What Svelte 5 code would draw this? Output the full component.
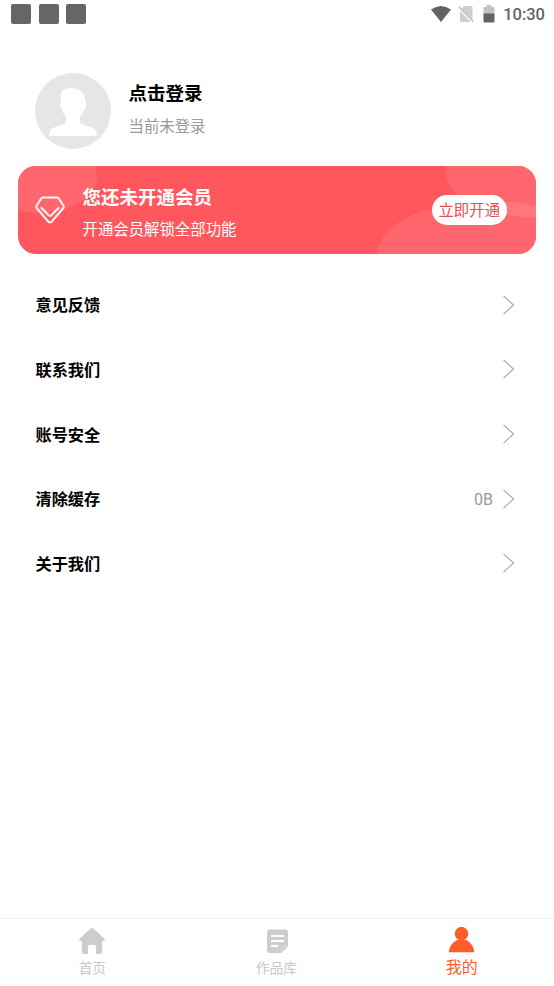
<script>
  const rows = [
    { label: '意见反馈' },
    { label: '联系我们' },
    { label: '账号安全' },
    { label: '清除缓存', value: '0B' },
    { label: '关于我们' }
  ];
</script>

<div class="screen">
  <header class="status">
    <div class="notices"><i></i><i></i><i></i></div>
    <div class="system">
      <svg class="wifi" width="22" height="18" viewBox="0 0 22 18"><path d="M1 4.5Q11-2.5 21 4.5L11 17Z" fill="#636363" /></svg>
      <svg class="sim" width="16" height="18" viewBox="0 0 16 18">
        <path d="M6 1H13.5Q14.5 1 14.5 2V16Q14.5 17 13.5 17H3Q2 17 2 16V5Z" fill="#cecece" />
        <path d="M.2 2.2 15 17" stroke="#fff" stroke-width="3" />
        <path d="M.5 1.5 15.3 16.5" stroke="#bcbcbc" stroke-width="1.5" />
      </svg>
      <svg class="battery" width="12" height="18" viewBox="0 0 12 18">
        <path d="M3.5 0H8.5V2H11Q11.5 2 11.5 3V9H.5V3Q.5 2 1 2H3.5Z" fill="#c2c2c2" />
        <path d="M.5 8.5H11.5V16.5Q11.5 17.5 10.5 17.5H1.5Q.5 17.5.5 16.5Z" fill="#636363" />
      </svg>
      <time>10:30</time>
    </div>
  </header>

  <section class="profile">
    <svg class="avatar" width="76" height="76" viewBox="0 0 76 76">
      <circle cx="38" cy="38" r="38" fill="#e6e6e6" />
      <path d="M27 18Q30 15 36 15Q40 15 44 17Q50 19 50 27Q51 28 51 31Q51 36 48.5 37Q48 41 45 44V48Q45 51 51 52.5L58 55Q62 57 62 63H14Q14 57 18 55L25 52.5Q31 51 31 48V44Q28 41 27.5 37Q25 36 25 31Q25 29 26.3 28Q25 21 27 18Z" fill="#fff" />
    </svg>
    <div class="identity">
      <h1>点击登录</h1>
      <p>当前未登录</p>
    </div>
  </section>

  <section class="member">
    <svg class="backdrop" width="518" height="88" viewBox="0 0 518 88" aria-hidden="true">
      <g fill="#ff666d">
        <ellipse cx="20" cy="11" rx="59" ry="36" />
        <path d="M428 0Q426 24 449 36Q482 52 518 51V0Z" />
        <path d="M358 88Q362 63 397 48C430 35 476 34 518 39V88Z" />
      </g>
      <path d="M449 36Q482 52 518 51V39Q485 34 449 36Z" fill="#ff777d" />
    </svg>
    <svg class="gem" width="30" height="28" viewBox="0 0 30 28" fill="none" stroke="#fff2ee" stroke-width="2.1" stroke-linejoin="round" stroke-linecap="round">
      <path d="M8 1.5H22Q23 1.5 23.7 2.4L28.3 9.5Q29.2 11 28 12.5L16.8 25.5Q15 27.5 13.2 25.5L2 12.5Q.8 11 1.7 9.5L6.3 2.4Q7 1.5 8 1.5Z" />
      <path d="M6.500 12 13.700 19.200Q15 20.500 16.300 19.200L23.500 12" />
    </svg>
    <div class="copy">
      <h2>您还未开通会员</h2>
      <p>开通会员解锁全部功能</p>
    </div>
    <button>立即开通</button>
  </section>

  <main>
    {#each rows as row}
      <div class="row">
        <span class="label">{row.label}</span>
        {#if row.value}<span class="value">{row.value}</span>{/if}
        <svg width="12" height="20" viewBox="0 0 12 20" fill="none" stroke="#a5a5a5" stroke-width="1.1"><path d="M.5 .8 10.5 10 .5 19.2" /></svg>
      </div>
    {/each}
  </main>

  <nav>
    <div class="tab">
      <svg width="28" height="28" viewBox="0 0 28 28"><path d="M12.2 1.9Q14 .3 15.8 1.9L26 11.2Q28 13.5 25 14H24.2V25Q24.2 27 22.2 27H18V20Q18 17.8 16 17.8H12Q10 17.8 10 20V27H5.8Q3.8 27 3.8 25V14H3Q0 13.5 2 11.2Z" fill="#cdcdcd" /></svg>
      <span>首页</span>
    </div>
    <div class="tab library">
      <svg width="28" height="28" viewBox="0 0 28 28">
        <path d="M7 2.500H22Q25 2.500 25 5.500V19.500L18.500 26H7Q4 26 4 23V5.500Q4 2.500 7 2.500Z" fill="#cdcdcd" />
        <path d="M18.800 25V21.500Q18.800 19.300 21 19.300H24.500" fill="none" stroke="#e4e4e4" stroke-width="1" />
        <path d="M8.800 9H20.500M8.800 14H20.500M8.800 19H14.500" stroke="#fff" stroke-width="1.800" stroke-linecap="round" />
      </svg>
      <span>作品库</span>
    </div>
    <div class="tab active">
      <svg width="28" height="28" viewBox="0 0 28 28" fill="#fd5d2b"><circle cx="13.500" cy="6.700" r="6.800" /><path d="M.8 25.200Q1.300 17 9 13H18.300Q25.800 17 26.300 25.200Z" /></svg>
      <span>我的</span>
    </div>
  </nav>
</div>

<style>
  :global(body) { margin: 0; background: #fff; }
  .screen {
    width: 554px;
    height: 986px;
    display: flex;
    flex-direction: column;
    overflow: hidden;
    background: #fff;
    color: #000;
    font-family: Roboto, "Noto Sans CJK SC", sans-serif;
  }
  h1, h2, p { margin: 0; }
  svg { display: block; flex: none; }

  .status {
    height: 28px;
    flex: none;
    display: flex;
    justify-content: space-between;
    align-items: center;
    padding: 0 9px 0 11px;
  }
  .notices { display: flex; gap: 7.700px; }
  .notices i { width: 20px; height: 20px; border-radius: 2px; background: #666; }
  .system { display: flex; align-items: center; }
  .sim { margin-left: 6px; }
  .battery { margin-left: 9px; }
  time { margin-left: 8px; padding-top: 2px; font: 500 16.500px/20px Roboto, sans-serif; color: #636363; }

  .profile { display: flex; height: 76px; margin: 45px 35px 0; flex: none; }
  .identity { margin-left: 17.500px; padding-top: 7px; }
  h1, h2 { font-size: 18.500px; line-height: 28px; font-weight: 700; }
  .identity p { margin-top: 7px; font-size: 15.400px; line-height: 24px; color: #999; }

  .member {
    position: relative;
    display: flex;
    align-items: center;
    height: 88px;
    flex: none;
    box-sizing: border-box;
    margin: 17px 18px 0;
    padding: 0 29px 0 17px;
    border-radius: 18px;
    overflow: hidden;
    background: #ff575d;
    color: #fff;
  }
  .backdrop { position: absolute; inset: 0; }
  .gem, .copy, button { position: relative; }
  .copy { margin-left: 17.500px; padding-top: 6px; }
  .copy p { margin-top: 6px; font-size: 15.400px; line-height: 24px; }
  button {
    margin-left: auto;
    width: 75.500px;
    height: 30px;
    border: 0;
    padding: 0 0 2px;
    border-radius: 15px;
    background: #fff;
    color: #ed4e54;
    font: 15.400px/28px "Noto Sans CJK SC", sans-serif;
  }

  main { flex: 1; padding: 18.300px 39px 0 35.500px; }
  .row { display: flex; align-items: center; height: 64.700px; }
  .label { margin-top: -1px; font-size: 16.200px; font-weight: 700; }
  .value { margin-left: auto; padding-top: 1px; font-size: 16px; color: #999; }
  .row svg { margin-left: auto; }
  .value + svg { margin-left: 10px; }

  nav { height: 68px; flex: none; display: flex; border-top: 1px solid #f2f2f2; box-sizing: border-box; }
  .tab { flex: 1; display: flex; flex-direction: column; align-items: center; padding-top: 8px; color: #c8c8c8; font-size: 13.700px; line-height: 24px; }
  .tab span { margin-top: 1px; }
  .library span { margin-right: 1px; }
  .active { color: #fd5d2b; font-size: 16px; }
</style>
